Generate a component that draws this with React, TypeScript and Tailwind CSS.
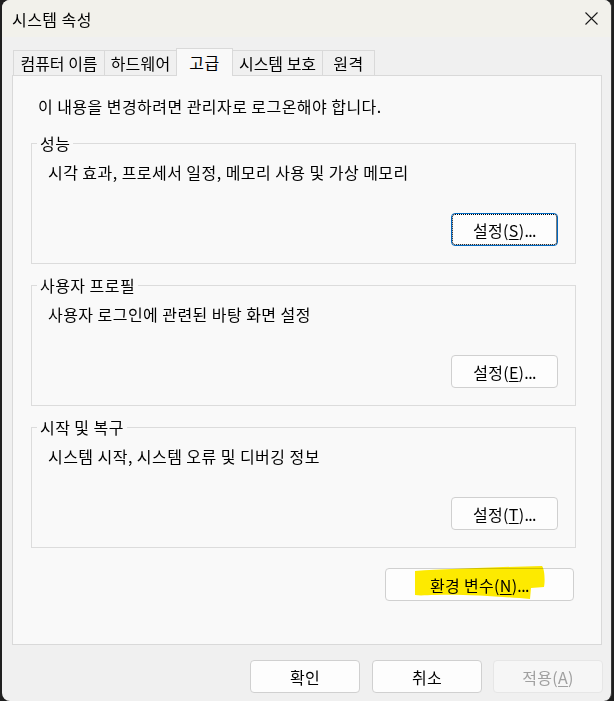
import React from "react";

const FONT = "font-['Noto_Sans_CJK_KR','Noto_Sans',sans-serif]";

function Btn({
  children,
  className = "",
}: {
  children: React.ReactNode;
  className?: string;
}) {
  return (
    <button
      className={
        "h-[33px] rounded-[4px] border border-[#d0d0d0] bg-[#fdfdfd] text-[16px] tracking-[0.3px] leading-none text-black flex items-center justify-center " +
        className
      }
    >
      {children}
    </button>
  );
}

function Dots() {
  return <span className="tracking-[-0.6px]">...</span>;
}

function Group({
  title,
  desc,
  btn,
}: {
  title: string;
  desc: string;
  btn: React.ReactNode;
}) {
  return (
    <fieldset className="w-[545px] border border-[#dcdcdc] pl-[5px]">
      <legend className="px-[3px] leading-[20px] text-black">{title}</legend>
      <div className="pl-[11px] pt-[9px] leading-[20px] text-black">{desc}</div>
      <div className="mt-[31px] mb-[17px] flex justify-end pr-[17px]">{btn}</div>
    </fieldset>
  );
}

export default function App() {
  return (
    <div className={"w-[614px] h-[701px] bg-[#1f1f1f] flex overflow-hidden text-[16px] tracking-[0.45px] text-black " + FONT}>
      <div className="ml-[2px] w-[610px] h-[701px] rounded-[8px] overflow-hidden bg-[#f0f0f0] flex flex-col border-r border-[#3a3a3a]">
        {/* Title bar */}
        <div className="h-[37px] bg-[#f2f1eb] flex items-center justify-between pl-[10px] pr-[13px] shrink-0">
          <span className="leading-none">시스템 속성</span>
          <svg width="13" height="13" viewBox="0 0 13 13" className="block">
            <path d="M0.5 0.5 L12.5 12.5 M12.5 0.5 L0.5 12.5" stroke="#1a1a1a" strokeWidth="1.1" fill="none" />
          </svg>
        </div>

        {/* Tabs */}
        <div className="pt-[11px] pl-[11px] flex items-end shrink-0">
          <div className="w-[91px] h-[25px] border-t border-l border-[#d9d9d9] bg-[#f0f0f0] flex items-center justify-center tracking-[0px]">컴퓨터 이름</div>
          <div className="w-[72px] h-[25px] border-t border-l border-[#d9d9d9] bg-[#f0f0f0] flex items-center justify-center tracking-[0.2px]">하드웨어</div>
          <div className="relative z-10 w-[57px] h-[28px] -mb-px border-t border-l border-r border-[#d9d9d9] bg-[#f9f9f9] flex items-center justify-center pb-[1px]">고급</div>
          <div className="w-[89px] h-[25px] border-t border-[#d9d9d9] bg-[#f0f0f0] flex items-center justify-center tracking-[0px]">시스템 보호</div>
          <div className="w-[53px] h-[25px] border-t border-l border-r border-[#d9d9d9] bg-[#f0f0f0] flex items-center justify-center">원격</div>
        </div>

        {/* Panel */}
        <div className="ml-[10px] w-[590px] h-[570px] shrink-0 border border-[#d9d9d9] bg-[#f9f9f9] flex flex-col">
          <div className="pl-[25px] pt-[20px] leading-[20px]">
            이 내용을 변경하려면 관리자로 로그온해야 합니다.
          </div>
          <div className="mt-[17px] ml-[18px] flex flex-col gap-[11px]">
            <Group
              title="성능"
              desc="시각 효과, 프로세서 일정, 메모리 사용 및 가상 메모리"
              btn={
                <Btn className="w-[107px] !border-[#0067c0] outline-1 outline-dotted outline-black outline-offset-[-2px]">
                  설정(<span className="underline underline-offset-2">S</span>)<Dots />
                </Btn>
              }
            />
            <Group
              title="사용자 프로필"
              desc="사용자 로그인에 관련된 바탕 화면 설정"
              btn={
                <Btn className="w-[107px]">
                  설정(<span className="underline underline-offset-2">E</span>)<Dots />
                </Btn>
              }
            />
            <Group
              title="시작 및 복구"
              desc="시스템 시작, 시스템 오류 및 디버깅 정보"
              btn={
                <Btn className="w-[107px]">
                  설정(<span className="underline underline-offset-2">T</span>)<Dots />
                </Btn>
              }
            />
          </div>
          <div className="mt-[20px] flex justify-end pr-[27px]">
            <div className="relative">
              <Btn className="w-[189px]">
                환경 변수(<span className="underline underline-offset-2">N</span>)<Dots />
              </Btn>
              <svg
                width="189"
                height="40"
                viewBox="0 -4 189 40"
                className="absolute left-0 top-[-4px] pointer-events-none mix-blend-multiply"
              >
                <path
                  d="M30 3 C60 1 110 -1 157 -2 C160 2 160 14 159 19 L146 20 L145 31 C120 29 80 26 50 27 C42 27 36 28 30 27 Z"
                  fill="#ffec00"
                />
              </svg>
            </div>
          </div>
        </div>

        {/* Bottom buttons */}
        <div className="pt-[15px] pr-[8px] flex justify-end">
          <Btn className="w-[110px]">확인</Btn>
          <Btn className="w-[110px] ml-[12px]">취소</Btn>
          <Btn className="w-[110px] ml-[11px] !bg-[#f6f6f6] !border-[#e6e6e6] !text-[#a0a0a0]">
            적용(<span className="underline underline-offset-2">A</span>)
          </Btn>
        </div>
      </div>
    </div>
  );
}
